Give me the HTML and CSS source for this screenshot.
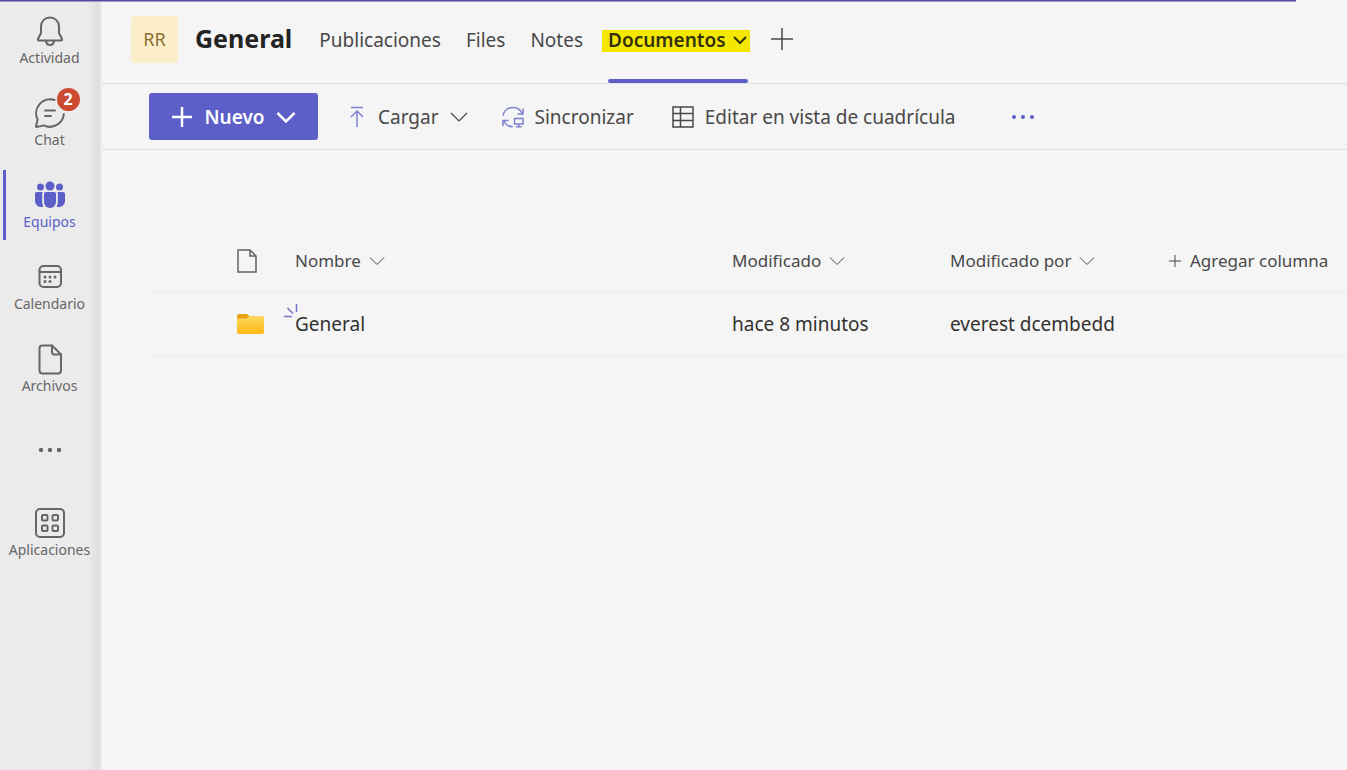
FILE: index.html
```
<!DOCTYPE html>
<html lang="es">
<head>
<meta charset="utf-8">
<title>General - Documentos</title>
<link rel="stylesheet" href="styles.css">
</head>
<body>
<div class="accent-bar"></div>
<div class="app">
  <nav class="rail" aria-label="Aplicaciones">
    <button class="rail-item">
      <svg class="rail-icon" viewBox="0 0 32 32"><path d="M16 2.500c-5.200 0-9 4-9 9v6.500L4 24c-.4.900.1 1.500 1 1.500h22c.9 0 1.400-.6 1-1.500L25 18v-6.500c0-5-3.800-9-9-9z"/><path d="M12 26c.3 2.300 1.900 4 4 4s3.700-1.700 4-4"/></svg>
      <span>Actividad</span>
    </button>
    <button class="rail-item">
      <span class="icon-wrap">
        <svg class="rail-icon" viewBox="0 0 32 32"><path d="M20.500 3A14 14 0 0 0 3.600 22.500L2 29.200c-.1.500.3.900.8.800l7-1.600A14 14 0 0 0 29.800 17"/><path d="M11 13.500h10M11 19h6"/></svg>
        <span class="badge">2</span>
      </span>
      <span>Chat</span>
    </button>
    <button class="rail-item active" aria-current="page">
      <svg class="rail-icon solid" viewBox="0 0 32 32"><circle cx="16" cy="7" r="4.500"/><circle cx="6.500" cy="8" r="3.500"/><circle cx="25.500" cy="8" r="3.500"/><path d="M10 15c0-1.200.8-2 2-2h8c1.200 0 2 .8 2 2V23a6 6 0 0 1-12 0z"/><path d="M3 13h5.800c-.4.700-.6 1.300-.6 2V23c0 1.700.4 3.200 1.200 4.500A6 6 0 0 1 1 22v-7c0-1.200.8-2 2-2zM29 13h-5.800c.4.700.6 1.300.6 2V23c0 1.700-.4 3.200-1.200 4.500A6 6 0 0 0 31 22v-7c0-1.200-.8-2-2-2z"/></svg>
      <span>Equipos</span>
    </button>
    <button class="rail-item">
      <svg class="rail-icon" viewBox="0 0 32 32"><rect x="5.500" y="5" width="21.500" height="21" rx="4"/><path d="M5.500 11h21.500"/><g class="dot"><circle cx="11" cy="16" r="1.500"/><circle cx="16" cy="16" r="1.500"/><circle cx="21" cy="16" r="1.500"/><circle cx="11" cy="20.500" r="1.500"/><circle cx="16" cy="20.500" r="1.500"/></g></svg>
      <span>Calendario</span>
    </button>
    <button class="rail-item">
      <svg class="rail-icon" viewBox="0 0 32 32"><path d="M8.500 2.500H18l9 9v16c0 1.700-1.300 3-3 3H8.500c-1.700 0-3-1.300-3-3v-22c0-1.700 1.300-3 3-3z"/><path d="M18 2.500V9c0 1.500 1 2.500 2.500 2.500H27"/></svg>
      <span>Archivos</span>
    </button>
    <button class="rail-item more" aria-label="Más aplicaciones">
      <svg class="rail-icon" viewBox="0 0 32 32"><g class="dot"><circle cx="7" cy="16" r="2.200"/><circle cx="16" cy="16" r="2.200"/><circle cx="25" cy="16" r="2.200"/></g></svg>
    </button>
    <button class="rail-item">
      <svg class="rail-icon" viewBox="0 0 32 32"><rect x="2" y="2" width="28" height="28" rx="4"/><rect x="8" y="8" width="5.500" height="5.500" rx="1"/><rect x="18.500" y="8" width="5.500" height="5.500" rx="1"/><rect x="8" y="18.500" width="5.500" height="5.500" rx="1"/><rect x="18.500" y="18.500" width="5.500" height="5.500" rx="1"/></svg>
      <span>Aplicaciones</span>
    </button>
  </nav>

  <main class="main">
    <header class="channel-header">
      <div class="avatar">RR</div>
      <h1 class="channel-title">General</h1>
      <nav class="tabs" aria-label="Pestañas">
        <a class="tab" href="#">Publicaciones</a>
        <a class="tab" href="#">Files</a>
        <a class="tab" href="#">Notes</a>
        <a class="tab selected" href="#"><span class="mark">Documentos <svg class="mark-chevron" viewBox="0 0 16 16"><path d="M2 5l6 6 6-6"/></svg></span></a>
      </nav>
      <button class="add-tab" aria-label="Agregar una pestaña"><svg viewBox="0 0 22 22"><path d="M11 0v22M0 11h22"/></svg></button>
    </header>

    <div class="toolbar">
      <button class="primary">
        <svg class="plus" viewBox="0 0 22 22"><path d="M11 1v20M1 11h20"/></svg>
        Nuevo
        <svg class="chevron" viewBox="0 0 20 20"><path d="M1.500 6l8.500 8.500 8.500-8.500"/></svg>
      </button>
      <button class="command upload">
        <svg class="cmd-icon accent" viewBox="0 0 22 22"><path d="M5 1.500h12M11 21V5.500M5 11l6-6 6 6"/></svg>
        Cargar
        <svg class="chevron" viewBox="0 0 20 20"><path d="M2 6l8 8 8-8"/></svg>
      </button>
      <button class="command sync">
        <svg class="cmd-icon accent" viewBox="0 0 22 22"><path d="M1 9.500C2 4.500 6 1.500 11 1.500c4 0 7.500 2.200 9.200 6M21 2.500v5.500h-5.500M1 20v-5.500h5.500M1.800 15c1.700 3.800 5 5.700 9 5.700"/><path d="M12.500 12.500h8.500v5.500h-8.500zM16.700 18v2.700M14 20.700h5.500"/></svg>
        Sincronizar
      </button>
      <button class="command grid-edit">
        <svg class="cmd-icon" viewBox="0 0 22 22"><path d="M1 1h20v20H1zM8.500 1v20M1 7.500h20M1 14.500h20"/></svg>
        Editar en vista de cuadrícula
      </button>
      <button class="overflow" aria-label="Más opciones"><svg viewBox="0 0 24 6"><circle cx="3" cy="3" r="2"/><circle cx="12" cy="3" r="2"/><circle cx="21" cy="3" r="2"/></svg></button>
    </div>

    <section class="files">
      <table class="file-table">
        <colgroup><col class="col-check"><col class="col-type"><col class="col-name"><col class="col-modified"><col class="col-author"><col class="col-add"></colgroup>
        <thead>
          <tr>
            <th></th>
            <th><svg class="type-icon" viewBox="0 0 20 24"><path d="M1 1h12l6 6v16H1zM13 1v6h6"/></svg></th>
            <th><button class="sort">Nombre <svg viewBox="0 0 16 16"><path d="M1 4.500l7 7 7-7"/></svg></button></th>
            <th><button class="sort">Modificado <svg viewBox="0 0 16 16"><path d="M1 4.500l7 7 7-7"/></svg></button></th>
            <th><button class="sort">Modificado por <svg viewBox="0 0 16 16"><path d="M1 4.500l7 7 7-7"/></svg></button></th>
            <th><button class="sort"><svg class="add-icon" viewBox="0 0 14 14"><path d="M7 1v12M1 7h12"/></svg> Agregar columna</button></th>
          </tr>
        </thead>
        <tbody>
          <tr>
            <td></td>
            <td><svg class="folder" viewBox="0 0 27 20"><defs><linearGradient id="folder-fill" x1="0" y1="0" x2="0" y2="1"><stop offset="0" stop-color="#ffd95c"/><stop offset="1" stop-color="#fdb813"/></linearGradient></defs><path d="M0 2C0 1 1 0 2 0h7.500c.8 0 1.300.3 1.800.8L13 3v5H0z" fill="#e8a010"/><path d="M0 4.500h9.500L12 2h13c1.200 0 2 .8 2 2v14c0 1.200-.8 2-2 2H2c-1.200 0-2-.8-2-2z" fill="url(#folder-fill)"/></svg></td>
            <td><a class="file-link" href="#">General<svg class="new-mark" viewBox="0 0 14 14"><path d="M12.500 0v8M3.500 4l5.500 5.500M0 12.500h8"/></svg></a></td>
            <td>hace 8 minutos</td>
            <td>everest dcembedd</td>
            <td></td>
          </tr>
        </tbody>
      </table>
    </section>
  </main>
</div>
</body>
</html>
```

FILE: styles.css
```
* { box-sizing: border-box; }

body {
  margin: 0;
  min-height: 100vh;
  display: flex;
  flex-direction: column;
  background: #f5f5f5;
  color: #484848;
  font-family: "Noto Sans", "Open Sans", sans-serif;
  font-size: 18px;
}

button {
  margin: 0;
  padding: 0;
  border: 0;
  background: none;
  color: inherit;
  font: inherit;
  cursor: pointer;
}

a { color: inherit; text-decoration: none; }

svg {
  display: block;
  flex: none;
  fill: none;
  stroke: currentColor;
}

.accent-bar {
  height: 2px;
  margin-right: 51px;
  background: #4f4b9c;
  border-bottom: 1px solid #9c9ac8;
}

.app { flex: 1; display: flex; }

/* Navigation rail */
.rail {
  flex: none;
  width: 102px;
  padding-right: 2px;
  background: linear-gradient(to right, #ebebeb 88px, #dedede 99px, #e6e6e6 100px);
  border-right: 1px solid #f0f0f0;
}

.rail-item {
  position: relative;
  display: flex;
  flex-direction: column;
  align-items: center;
  gap: 2px;
  width: 100%;
  height: 82px;
  padding-top: 13px;
  color: #666;
  font-size: 14px;
  line-height: 18px;
}

.rail-item.more { padding-top: 22px; }

.rail-item.active { color: #5b5fc7; }

.rail-item.active::before {
  content: "";
  position: absolute;
  left: 3px;
  top: 4px;
  width: 3px;
  height: 70px;
  background: #5b5fc7;
}

.rail-icon { width: 32px; height: 32px; stroke-width: 2; stroke-linecap: round; stroke-linejoin: round; }
.rail-icon.solid, .rail-icon .dot { fill: currentColor; stroke: none; }

.icon-wrap { position: relative; }

.badge {
  position: absolute;
  left: 23px;
  top: -9px;
  width: 23px;
  height: 23px;
  border-radius: 50%;
  background: #cc4a31;
  color: #fff;
  font-size: 16px;
  font-weight: 700;
  line-height: 23px;
  text-align: center;
}

/* Channel header */
.main { flex: 1; min-width: 0; }

.channel-header {
  display: flex;
  align-items: center;
  height: 82px;
  padding-left: 29px;
  border-bottom: 1px solid #e0e0e0;
}

.avatar {
  width: 47px;
  height: 47px;
  margin-bottom: 6px;
  border-radius: 4px;
  background: #fdeecb;
  color: #8a6f2c;
  line-height: 47px;
  text-align: center;
}

.channel-title {
  margin: 0 27px 10px 17px;
  color: #242424;
  font-size: 25px;
  line-height: 34px;
}

.tabs { display: flex; align-self: stretch; gap: 25px; }

.tab {
  display: flex;
  align-items: center;
  padding-bottom: 6px;
  font-size: 19px;
  line-height: 24px;
}

.tab.selected {
  position: relative;
  color: #33320c;
  font-weight: 600;
}

.tab.selected::after {
  content: "";
  position: absolute;
  left: 0;
  right: 0;
  bottom: 0;
  height: 4px;
  border-radius: 2px;
  background: #5b5fc7;
}

.mark {
  display: flex;
  align-items: center;
  gap: 6px;
  margin: 0 -2px 0 -6px;
  padding: 0 2px 0 6px;
  background: linear-gradient(#f5e800, #f5e800) left bottom / 100% 22px no-repeat;
}

.mark-chevron { width: 16px; height: 16px; stroke-width: 2; }

.add-tab { margin: 0 0 8px 23px; }
.add-tab svg { width: 22px; height: 22px; stroke-width: 1.500; }

/* Command bar */
.toolbar {
  display: flex;
  align-items: center;
  height: 66px;
  padding-left: 47px;
  border-bottom: 1px solid #e0e0e0;
  font-size: 19px;
  white-space: nowrap;
}

.primary {
  display: flex;
  align-items: center;
  justify-content: center;
  gap: 11px;
  width: 169px;
  height: 47px;
  border-radius: 3px;
  background: #5b5fc7;
  color: #fff;
  font-weight: 600;
}

.plus { width: 22px; height: 22px; stroke-width: 2.500; }
.chevron { width: 20px; height: 20px; stroke-width: 1.200; }
.primary .chevron { stroke-width: 2.500; }

.command { display: flex; align-items: center; gap: 11px; }
.upload { gap: 10px; margin-left: 28px; }
.sync { margin-left: 33px; }
.grid-edit { margin-left: 38px; }

.cmd-icon { width: 22px; height: 22px; stroke-width: 1.500; }
.cmd-icon.accent { color: #7e80cf; }

.overflow { margin-left: 56px; color: #5b5fc7; }
.overflow svg { width: 24px; height: 6px; fill: currentColor; stroke: none; }

/* File list */
.files { padding: 80px 0 0 46px; }

.file-table {
  width: 100%;
  border-collapse: collapse;
  table-layout: fixed;
  white-space: nowrap;
}

.col-check { width: 89px; }
.col-type { width: 58px; }
.col-name { width: 437px; }
.col-modified, .col-author { width: 218px; }

th, td {
  height: 63px;
  padding: 0;
  border-bottom: 1px solid #ebebeb;
  text-align: left;
  font-weight: 400;
}

th { height: 62px; }

td { color: #323130; font-size: 19px; }

.sort { display: flex; align-items: center; gap: 8px; font-size: 17px; }
.sort svg { width: 16px; height: 16px; stroke-width: 1; }
.sort .add-icon { width: 14px; height: 14px; }

.type-icon { width: 20px; height: 24px; stroke-width: 1.500; color: #616161; }
.folder { width: 27px; height: 20px; stroke: none; }

.file-link { position: relative; }

.new-mark {
  position: absolute;
  left: -11px;
  top: -7px;
  width: 14px;
  height: 14px;
  stroke-width: 1.500;
  color: #7376c9;
}
```
